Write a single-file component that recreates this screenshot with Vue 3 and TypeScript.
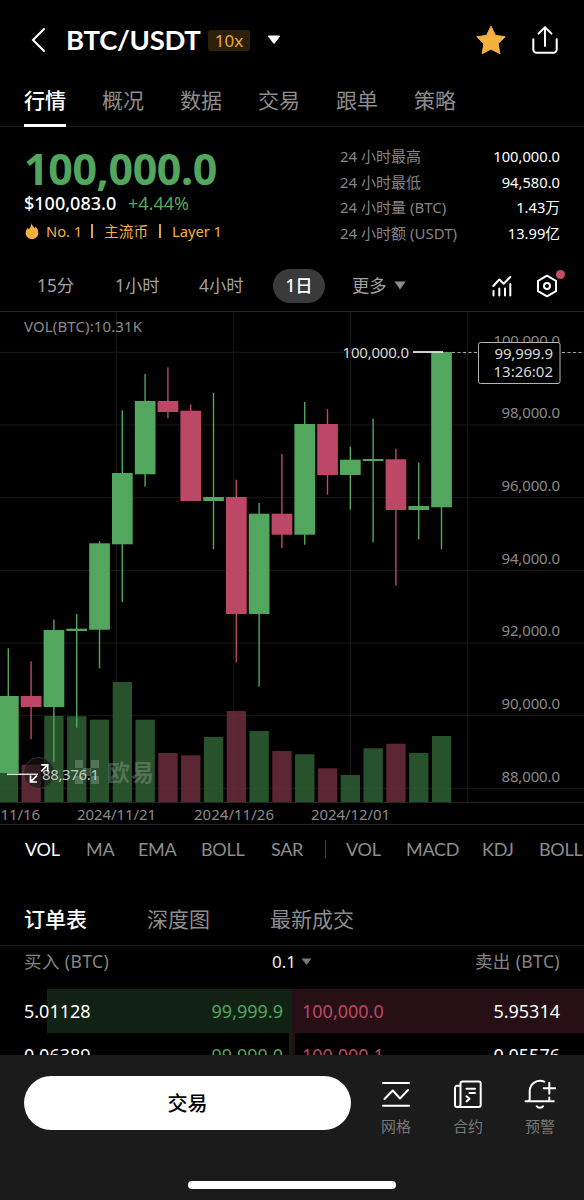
<script setup lang="ts">
interface Candle {
  up: boolean
  top: number
  bottom: number
  high: number
  low: number
  volume: number
}

const tabs = ['行情', '概况', '数据', '交易', '跟单', '策略']

const stats = [
  { label: '24 小时最高', value: '100,000.0' },
  { label: '24 小时最低', value: '94,580.0' },
  { label: '24 小时量 (BTC)', value: '1.43万' },
  { label: '24 小时额 (USDT)', value: '13.99亿' },
]

// [up, body top, body bottom, high, low, volume top]
const raw: [number, number, number, number, number, number][] = [
  [1, 696, 773, 648.3, 773, 766],
  [0, 696, 707, 661.3, 739, 764.7],
  [1, 630, 707, 619.7, 762, 716],
  [1, 628.7, 631, 614, 727.7, 716.3],
  [1, 543.3, 629.7, 541.3, 668.3, 719.7],
  [1, 473, 544.3, 410.3, 602, 682],
  [1, 401, 474.3, 374, 486.7, 719.7],
  [0, 401, 412, 367.3, 418, 753],
  [0, 410.7, 501, 404.3, 501, 755.3],
  [1, 497, 501, 393, 549.3, 737],
  [0, 497, 614, 479.7, 662.3, 711],
  [1, 513.7, 614, 503, 686.7, 731],
  [0, 513.7, 534.7, 454, 548, 751],
  [1, 424, 534.7, 402, 544.7, 754.3],
  [0, 424, 475, 409, 494.7, 768.3],
  [1, 459.7, 475, 446.7, 509.7, 775],
  [1, 459, 461, 418.7, 542.3, 748.3],
  [0, 459.3, 510, 448.7, 585.7, 743.7],
  [1, 506, 510, 462.7, 539.3, 753],
  [1, 352, 507.3, 352, 549.3, 736],
]
const candles: Candle[] = raw.map(([up, top, bottom, high, low, volume]) => ({
  up: up === 1, top, bottom, high, low, volume,
}))
const cx = (i: number): number => 8.3 + i * 22.8

const rows = [352.3, 425, 497.7, 570.4, 643, 715.7, 788.3]
const cols = [116.7, 233.7, 350.4, 467.6]
const prices = ['98,000.0', '96,000.0', '94,000.0', '92,000.0', '90,000.0', '88,000.0']
</script>

<template>
  <main class="app">
    <header class="head">
      <svg class="back" width="16" height="26" viewBox="0 0 16 26"><path d="M14 2 L3 13 L14 24" /></svg>
      <h1 class="pair">BTC/USDT</h1>
      <span class="lever">10x</span>
      <svg class="caret" width="14" height="10" viewBox="0 0 14 10"><path d="M1.2 1h11.6L7 8.6z" fill="#fff" stroke="#fff" stroke-width="1" stroke-linejoin="round" /></svg>
      <svg class="star" width="32" height="30" viewBox="0 0 32 30"><path d="M16 1.200l4.500 9.200 9.700 1.300-7.100 7 1.800 10L16 24.100l-8.900 4.600 1.800-10-7.100-7 9.700-1.300z" fill="#f4b13e" stroke="#f4b13e" stroke-width="1" stroke-linejoin="round" /></svg>
      <svg class="share" width="26" height="30" viewBox="0 0 26 30"><path d="M1.3 14.2v10.3a3.2 3.2 0 0 0 3.2 3.2h17a3.2 3.2 0 0 0 3.2-3.2V14.2M13 21V2.4M6.5 8.6L13 2.2l6.5 6.4" /></svg>
    </header>

    <nav class="tabs">
      <span v-for="(t, i) in tabs" :key="t" :class="['tab', { on: i === 0 }]">{{ t }}</span>
    </nav>

    <section class="info">
      <div class="quote">
        <div class="last">100,000.0</div>
        <div class="sub"><span class="usd">$100,083.0</span><span class="chg">+4.44%</span></div>
        <div class="tags">
          <svg width="14" height="18" viewBox="0 0 14 18"><path d="M6 1c.4 2 2.6 3.200 3.500 5.200.7-.5 1-1.100 1.100-1.800C12.600 6.300 13.300 8.700 13.300 11c0 3.500-2.700 6-6.300 6S.7 14.500.7 11c0-2.400 1-4.200 2.300-5.600.1 1 .4 1.500.9 1.900C5.500 5.600 6.300 3.500 6 1z" fill="#f4b13e" /></svg>
          <span class="no">No. 1</span><i class="bar" /><span class="main">主流币</span><i class="bar" /><span class="layer">Layer 1</span>
        </div>
      </div>
      <dl class="stats">
        <div v-for="s in stats" :key="s.label" class="stat">
          <dt>{{ s.label }}</dt><dd>{{ s.value }}</dd>
        </div>
      </dl>
    </section>

    <nav class="periods">
      <span class="p1">15分</span><span class="p2">1小时</span><span class="p3">4小时</span>
      <span class="p4">1日</span><span class="p5">更多</span>
      <svg class="more" width="12" height="9" viewBox="0 0 12 9"><path d="M.5.500h11L6 8.500z" fill="#8c8c8c" /></svg>
      <svg class="ind" width="20" height="22" viewBox="0 0 20 22"><path d="M1.500 16v4.500M7.300 13.500V20.500M13 13.500V20.500M18.300 9v11.500M1.300 11l6-6.500 4.400 4.200L18.300 2" /></svg>
      <span class="gearbox">
        <svg width="22" height="24" viewBox="0 0 22 24"><path d="M11 1.700l9 5.100v10.400l-9 5.100-9-5.100V6.800z" /><circle cx="11" cy="12" r="3" /></svg>
        <i class="dot" />
      </span>
    </nav>

    <svg class="chart" width="584" height="514" viewBox="0 311 584 514">
      <g stroke="#191919" stroke-width="1">
        <line v-for="y in rows" :key="y" x1="0" x2="584" :y1="y" :y2="y" />
        <line v-for="x in cols" :key="x" :x1="x" :x2="x" y1="312" y2="802" />
      </g>
      <g stroke="#252525" stroke-width="1">
        <path d="M0 311.500H584M0 802.500H584M0 824.500H584" />
      </g>
      <text class="dim" x="24" y="331.500" textLength="118">VOL(BTC):10.31K</text>
      <g opacity=".92">
        <rect v-for="(c, i) in candles" :key="i" :x="cx(i) - 9.600" :y="c.volume" width="19.300" :height="802 - c.volume" :fill="c.up ? '#2b5a30' : '#652a39'" />
      </g>
      <g v-for="(c, i) in candles" :key="i" :fill="c.up ? '#53a65d' : '#bc4865'">
        <rect :x="cx(i) - 0.700" :y="c.high" width="1.400" :height="c.low - c.high" />
        <rect :x="cx(i) - 10.300" :y="c.top" width="20.700" :height="c.bottom - c.top" />
      </g>
      <g fill="#a8b0aa" fill-opacity=".36">
        <path d="M75 760h8v8h-8zM91 760h8v8h-8zM83 768h8v8h-8zM75 776h8v8h-8zM91 776h8v8h-8z" />
        <text class="mark" x="107" y="780.500" textLength="47">欧易</text>
      </g>
      <circle cx="39" cy="773" r="15.500" fill="#161616" fill-opacity=".6" stroke="#4b4b4b" stroke-opacity=".6" />
      <text class="lite" x="42" y="779.500" textLength="57" fill-opacity=".9">88,376.1</text>
      <path d="M7 774.300H38" stroke="#ddd" stroke-width="1.500" />
      <path d="M41.200 764.900h6.500v6.500M47.400 765.200l-6.200 6.200M30.500 775.500v6.500h6.500M30.800 781.700l6.200-6.200" fill="none" stroke="#fff" stroke-width="1.700" />
      <text class="lite" x="342.500" y="357.500" textLength="66.500">100,000.0</text>
      <path d="M413 352H443" stroke="#e6e6e6" stroke-width="1.800" />
      <path d="M452 352.500H584" stroke="#a5a5a5" stroke-width="1" stroke-dasharray="3 2.500" />
      <g class="dim">
        <text x="493.500" y="345.500" textLength="66.500">100,000.0</text>
        <text v-for="(p, i) in prices" :key="p" x="501.500" :y="418.200 + i * 72.670" textLength="58.500">{{ p }}</text>
        <text x="0.500" y="820" textLength="39.500">11/16</text>
        <text x="77" y="820" textLength="79">2024/11/21</text>
        <text x="194" y="820" textLength="80">2024/11/26</text>
        <text x="311" y="820" textLength="79">2024/12/01</text>
      </g>
      <rect x="478.500" y="342.500" width="81.500" height="41" rx="2" fill="#000" stroke="#b5b5b5" />
      <text class="lite" x="494.500" y="359" textLength="58.500">99,999.9</text>
      <text class="lite" x="493.500" y="377" textLength="59.500">13:26:02</text>
    </svg>

    <nav class="inds">
      <span class="on i1">VOL</span><span class="i2">MA</span><span class="i3">EMA</span><span class="i4">BOLL</span><span class="i5">SAR</span>
      <i class="sep" />
      <span class="i6">VOL</span><span class="i7">MACD</span><span class="i8">KDJ</span><span class="i9">BOLL</span>
    </nav>

    <nav class="books"><span class="on">订单表</span><span>深度图</span><span>最新成交</span></nav>

    <section class="book">
      <div class="bookhead">
        <span class="buy">买入 (BTC)</span>
        <span class="tick">0.1<svg width="11" height="8" viewBox="0 0 11 8"><path d="M.5.500h10L5.500 7z" fill="#777" /></svg></span>
        <span class="sell">卖出 (BTC)</span>
      </div>
      <div class="level">
        <div class="half bid full"><span>5.01128</span><span class="g">99,999.9</span></div>
        <div class="half ask full"><span class="r">100,000.0</span><span>5.95314</span></div>
      </div>
      <div class="level">
        <div class="half bid"><span>0.06389</span><span class="g">99,999.0</span></div>
        <div class="half ask"><span class="r">100,000.1</span><span>0.05576</span></div>
      </div>
    </section>

    <footer class="foot">
      <div class="actions">
        <button class="trade">交易</button>
        <div class="act">
          <svg width="32" height="32" viewBox="0 0 32 32"><path d="M3 5H29M3 27.700H29M4.500 21l8.300-8.500 7.200 8L28 12" /></svg><span>网格</span>
        </div>
        <div class="act">
          <svg width="32" height="32" viewBox="0 0 32 32"><path d="M8.500 7.800V5.500A2 2 0 0 1 10.500 3.500H26.700a2 2 0 0 1 2 2V27a2 2 0 0 1-2 2H5a2 2 0 0 1-2-2V9.800a2 2 0 0 1 2-2H8.500V26.500a2.500 2.500 0 0 1-2 2.500M14.500 10.700H23M17.500 15H23M14.500 18.200l3 2.500-3 2.700" /></svg><span>合约</span>
        </div>
        <div class="act">
          <svg width="32" height="32" viewBox="0 0 32 32"><path d="M20.300 3.700A10.300 10.300 0 0 0 5.700 12.800V21.500L4.500 23M1.500 23.200H29.800M25.300 19.500v3.500M25.300 4.800V15.800M19.700 10.300H31.200M12.800 28.300a3.400 2.600 0 0 0 6.200 0" /></svg><span>预警</span>
        </div>
      </div>
      <div class="home" />
    </footer>
  </main>
</template>

<style>
body { background: #000; }
</style>

<style scoped>
.app {
  width: 584px; height: 1200px; overflow: hidden; background: #000; color: #fff;
  display: flex; flex-direction: column;
  font-family: "Noto Sans", "Noto Sans CJK SC", sans-serif; font-size: 15px;
  box-sizing: border-box;
}
.app span, .app dt, .app dd { white-space: nowrap; }
svg { display: block; flex: none; }
h1, dl, dd { margin: 0; }

.head { height: 80px; flex: none; display: flex; align-items: center; padding: 0 26px 0 30px; box-sizing: border-box; }
.back, .share, .ind, .gearbox svg, .act svg { fill: none; stroke: #fff; stroke-width: 2; stroke-linejoin: round; stroke-linecap: round; }
.back { stroke-linejoin: miter; }
.pair { width: 135px; margin-left: 20px; font: 700 27.500px/36px Lato, "Noto Sans", sans-serif; letter-spacing: -.3px; white-space: nowrap; }
.lever { width: 42px; height: 21px; margin-left: 7px; border-radius: 3px; background: #2d200b; color: #e8a93c; font-size: 17px; line-height: 21px; text-align: center; }
.caret { margin-left: 17px; }
.star { margin-left: auto; }
.share { margin-left: 25px; }

.tabs { height: 47px; flex: none; display: flex; gap: 36px; padding-left: 24px; border-bottom: 1px solid #1b1b1b; box-sizing: border-box; }
.tab { height: 47px; width: 42px; box-sizing: border-box; font: 400 21px/38px "Noto Sans CJK SC", sans-serif; color: #8d8d8d; }
.tab.on { color: #fff; font-weight: 500; border-bottom: 3px solid #fff; }

.info { height: 133px; flex: none; display: flex; justify-content: space-between; padding: 0 24px; }
.last { height: 51px; margin-top: 15px; font: 700 43px/54px "Noto Sans", sans-serif; letter-spacing: -.4px; color: #53a65d; }
.sub { display: flex; height: 20px; line-height: 20px; font-size: 18px; font-weight: 500; }
.usd { width: 104px; }
.chg { color: #53a65d; font-weight: 400; }
.tags { display: flex; align-items: center; height: 20px; line-height: 20px; margin-top: 8px; color: #f4b13e; font-size: 14.700px; }
.tags svg { margin: 0 7px 0 1px; }
.no { width: 35px; } .main { width: 45px; }
.bar { width: 2px; height: 14px; margin: 0 11px 0 10px; background: #e0a23a; }
.stats { width: 220px; padding-top: 17px; }
.stat { display: flex; justify-content: space-between; height: 25.500px; line-height: 25px; font-size: 15px; }
.stat dt { color: #858585; }
.stat dd { font-size: 14.700px; }

.periods { height: 51px; flex: none; display: flex; align-items: center; padding-left: 37px; font-size: 17.300px; color: #a2a2a2; line-height: 34px; }
.p1 { width: 78px; } .p2 { width: 84px; } .p3 { width: 74px; }
.p4 { width: 52px; height: 34px; border-radius: 17px; background: #3a3a3a; color: #fff; text-align: center; font-weight: 500; }
.p5 { margin-left: 27px; width: 42px; }
.ind { margin-left: 86px; }
.gearbox { position: relative; margin-left: 24px; }
.dot { position: absolute; width: 9px; height: 9px; border-radius: 50%; background: #c64d68; right: -7px; top: -4px; }

.chart text { font-size: 15px; fill: #d8d8d8; }
.chart .dim, .chart .dim text { fill: #8a8a8a; }
.chart .mark { font: 700 23px "Noto Sans CJK SC", sans-serif; fill: inherit; }

.inds { height: 50px; flex: none; display: flex; align-items: center; padding: 0 0 2px 25px; box-sizing: border-box; font-family: Lato, "Noto Sans", sans-serif; font-size: 18px; letter-spacing: -.3px; color: #8d8d8d; line-height: 24px; }
.inds span { flex: none; }
.i1 { width: 61px; } .i2 { width: 52px; } .i3 { width: 63px; } .i4 { width: 70px; } .i5 { width: 54px; }
.inds .on { color: #fff; }
.sep { width: 1px; height: 18px; background: #444; margin-right: 20px; flex: none; }
.i6 { width: 60px; } .i7 { width: 76px; } .i8 { width: 57px; }

.books { height: 71px; flex: none; display: flex; gap: 60px; padding: 19px 0 0 24px; border-bottom: 1px solid #1b1b1b; box-sizing: border-box; font: 400 21px/48px "Noto Sans CJK SC", sans-serif; color: #8d8d8d; }
.books .on { color: #fff; font-weight: 500; }

.book { height: 109px; flex: none; overflow: hidden; }
.bookhead { display: flex; height: 43px; padding: 0 24px; line-height: 31px; font-size: 17px; color: #858585; }
.buy, .sell { flex: 1; font-size: 17.500px; letter-spacing: .4px; }
.sell { text-align: right; }
.tick { display: flex; align-items: center; height: 31px; gap: 5px; color: #eee; }
.level { display: flex; height: 44px; font-size: 18px; line-height: 44px; }
.half { width: 292px; height: 44px; display: flex; justify-content: space-between; box-sizing: border-box; }
.bid { padding: 0 9px 0 24px; background: linear-gradient(#112214, #112214) right / 3px 100% no-repeat; }
.ask { padding: 0 24px 0 10px; background: linear-gradient(#260f15, #260f15) left / 3px 100% no-repeat; }
.bid.full { background-size: 245px 100%; }
.ask.full { background-size: 100% 100%; }
.g { color: #53a65d; }
.r { color: #bc4865; }

.foot { height: 145px; flex: none; background: #1b1b1b; position: relative; z-index: 1; }
.actions { display: flex; padding: 21px 8px 0 24px; height: 127px; box-sizing: border-box; }
.trade { width: 327px; height: 54px; margin-right: 9px; padding: 0; border: 0; border-radius: 27px; background: #fff; color: #000; font: 500 20px/54px "Noto Sans CJK SC", sans-serif; }
.act { width: 72px; display: flex; flex-direction: column; align-items: center; padding-top: 2px; font: 400 15px/20px "Noto Sans CJK SC", sans-serif; color: #777; }
.act span { margin-top: 6px; }
.home { width: 208px; height: 8px; border-radius: 4px; background: #fff; margin: -1px auto 0; }
</style>
